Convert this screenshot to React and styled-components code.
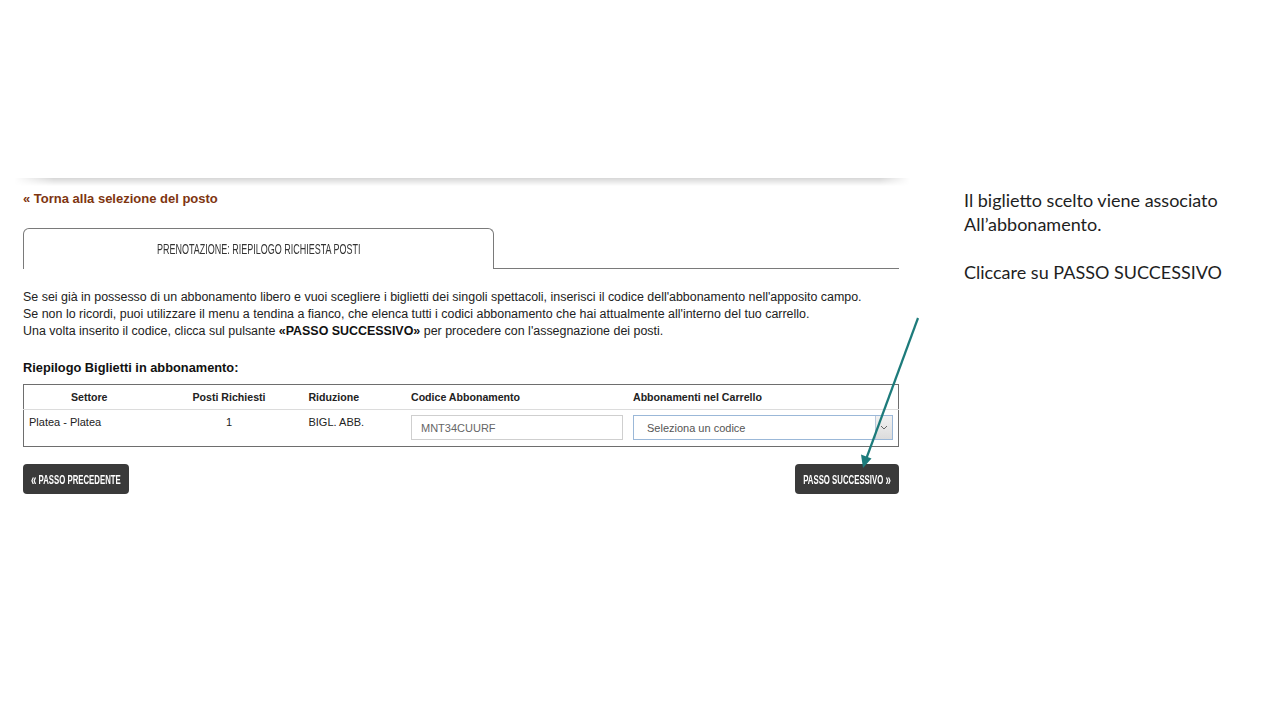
import React from "react";
import styled, { createGlobalStyle } from "styled-components";

const GlobalStyle = createGlobalStyle`
  html, body {
    margin: 0;
    padding: 0;
    background: #ffffff;
  }
  body {
    font-family: "Liberation Sans", Arial, sans-serif;
    color: #222;
  }
`;

const Slide = styled.div`
  position: relative;
  width: 1280px;
  height: 720px;
  display: flex;
  overflow: hidden;
`;

const Capture = styled.div`
  width: 910px;
  padding-top: 178px;
  flex-shrink: 0;
`;

const TopShadow = styled.div`
  height: 8px;
  margin-left: 14px;
  background: linear-gradient(to bottom, rgba(0, 0, 0, 0.16), rgba(0, 0, 0, 0));
  -webkit-mask-image: linear-gradient(to right, transparent 0, #000 40px, #000 calc(100% - 30px), transparent 100%);
  mask-image: linear-gradient(to right, transparent 0, #000 40px, #000 calc(100% - 30px), transparent 100%);
`;

const Content = styled.div`
  width: 876px;
  margin-left: 23px;
`;

const BackLink = styled.a`
  display: block;
  margin-top: 5px;
  font-size: 13px;
  line-height: 16px;
  font-weight: bold;
  color: #7e3510;
  text-decoration: none;
`;

const TabBar = styled.div`
  display: flex;
  align-items: flex-end;
  margin-top: 21px;
`;

const Tab = styled.div`
  width: 471px;
  height: 41px;
  border: 1px solid #7a7a7a;
  border-bottom: none;
  border-radius: 6px 6px 0 0;
  display: flex;
  align-items: center;
  justify-content: center;
  padding-bottom: 2px;
  box-sizing: border-box;
  color: #333;
`;

/* the site's condensed heading face is not installed: squeeze Liberation Sans */
const Condensed = styled.span`
  display: inline-block;
  white-space: nowrap;
  font-size: ${(p) => p.$size || 13}px;
  font-weight: ${(p) => (p.$bold ? "bold" : "normal")};
  transform: scaleX(${(p) => p.$scale || 0.75});
  transform-origin: center;
`;

const Chevron = styled.span`
  font-size: 1.25em;
  font-weight: 900;
  vertical-align: -1px;
`;

const TabLine = styled.div`
  flex: 1;
  border-bottom: 1px solid #7a7a7a;
`;

const Intro = styled.p`
  margin: 20px 0 0;
  font-size: 12.45px;
  line-height: 17px;
  color: #222;

  b {
    color: #111;
  }
`;

const SectionTitle = styled.h3`
  margin: 20px 0 0;
  font-size: 12.8px;
  line-height: 16px;
  font-weight: bold;
  color: #111;
`;

const Table = styled.table`
  margin-top: 8px;
  width: 100%;
  border-collapse: collapse;
  border: 1px solid #6e6e6e;
  font-size: 11px;
  color: #222;
`;

const Th = styled.th`
  height: 24px;
  padding: 0 5px;
  font-size: 10.6px;
  font-weight: bold;
  text-align: ${(p) => p.$align || "left"};
  border-bottom: 1px solid #dcdcdc;
  color: #222;
`;

const Td = styled.td`
  height: 30px;
  padding: 6px 5px 0;
  vertical-align: top;
  text-align: ${(p) => p.$align || "left"};
  font-size: 11px;
`;

const CodeInput = styled.div`
  width: 212px;
  height: 25px;
  box-sizing: border-box;
  border: 1px solid #cfcfcf;
  padding: 0 9px;
  display: flex;
  align-items: center;
  font-size: 11px;
  color: #666;
  margin-top: -1px;
`;

const Select = styled.div`
  width: 260px;
  height: 25px;
  box-sizing: border-box;
  border: 1px solid #9bb8d8;
  display: flex;
  align-items: stretch;
  margin-top: -1px;
  font-size: 11px;
  color: #555;
`;

const SelectValue = styled.div`
  flex: 1;
  display: flex;
  align-items: center;
  padding-left: 13px;
`;

const SelectToggle = styled.div`
  width: 16px;
  background: linear-gradient(#f2f2f2, #dcdcdc);
  border-left: 1px solid #b9c9dc;
  display: flex;
  align-items: center;
  justify-content: center;
`;

const Actions = styled.div`
  display: flex;
  justify-content: space-between;
  margin-top: 17px;
`;

const StepButton = styled.button`
  height: 30px;
  width: ${(p) => (p.$next ? "104px" : "106px")};
  padding: 0;
  border: none;
  border-radius: 4px;
  background: #3a3a3a;
  color: #fff;
  font-family: "Liberation Sans", sans-serif;
  display: flex;
  align-items: center;
  justify-content: center;
  overflow: hidden;
  cursor: pointer;
`;

const Notes = styled.div`
  margin-left: 54px;
  padding-top: 188px;
  font-family: Lato, "Open Sans", sans-serif;
  font-size: 18px;
  line-height: 24px;
  color: #1e1e1e;
`;

const NoteLine = styled.div`
  white-space: nowrap;
  margin-top: ${(p) => (p.$gap ? "24px" : "0")};
`;

const Pointer = styled.svg`
  position: absolute;
  left: 0;
  top: 0;
  pointer-events: none;
`;

export default function App() {
  return (
    <>
      <GlobalStyle />
      <Slide>
        <Capture>
          <TopShadow />
          <Content>
            <BackLink href="#">« Torna alla selezione del posto</BackLink>
            <TabBar>
              <Tab>
                <Condensed $size={15} $scale={0.6}>PRENOTAZIONE: RIEPILOGO RICHIESTA POSTI</Condensed>
              </Tab>
              <TabLine />
            </TabBar>
            <Intro>
              Se sei già in possesso di un abbonamento libero e vuoi scegliere i biglietti dei singoli spettacoli, inserisci il codice dell'abbonamento nell'apposito campo.
              <br />
              Se non lo ricordi, puoi utilizzare il menu a tendina a fianco, che elenca tutti i codici abbonamento che hai attualmente all'interno del tuo carrello.
              <br />
              Una volta inserito il codice, clicca sul pulsante <b>«PASSO SUCCESSIVO»</b> per procedere con l'assegnazione dei posti.
            </Intro>
            <SectionTitle>Riepilogo Biglietti in abbonamento:</SectionTitle>
            <Table>
              <colgroup>
                <col style={{ width: 132 }} />
                <col style={{ width: 150 }} />
                <col style={{ width: 103 }} />
                <col style={{ width: 221 }} />
                <col />
              </colgroup>
              <thead>
                <tr>
                  <Th $align="center">Settore</Th>
                  <Th $align="center">Posti Richiesti</Th>
                  <Th>Riduzione</Th>
                  <Th>Codice Abbonamento</Th>
                  <Th>Abbonamenti nel Carrello</Th>
                </tr>
              </thead>
              <tbody>
                <tr>
                  <Td>Platea - Platea</Td>
                  <Td $align="center">1</Td>
                  <Td>BIGL. ABB.</Td>
                  <Td>
                    <CodeInput>MNT34CUURF</CodeInput>
                  </Td>
                  <Td>
                    <Select>
                      <SelectValue>Seleziona un codice</SelectValue>
                      <SelectToggle>
                        <svg width="8" height="5" viewBox="0 0 8 5">
                          <path d="M1 1 L4 4 L7 1" fill="none" stroke="#666" strokeWidth="1" />
                        </svg>
                      </SelectToggle>
                    </Select>
                  </Td>
                </tr>
              </tbody>
            </Table>
            <Actions>
              <StepButton>
                <Condensed $size={13} $bold $scale={0.6}>
                  <Chevron>«</Chevron> PASSO PRECEDENTE
                </Condensed>
              </StepButton>
              <StepButton $next>
                <Condensed $size={13} $bold $scale={0.6}>
                  PASSO SUCCESSIVO <Chevron>»</Chevron>
                </Condensed>
              </StepButton>
            </Actions>
          </Content>
        </Capture>
        <Notes>
          <NoteLine>Il biglietto scelto viene associato</NoteLine>
          <NoteLine>All’abbonamento.</NoteLine>
          <NoteLine $gap>Cliccare su PASSO SUCCESSIVO</NoteLine>
        </Notes>
        <Pointer width="1280" height="720" viewBox="0 0 1280 720">
          <line x1="918" y1="318" x2="866.5" y2="458" stroke="#1d7b7b" strokeWidth="2.2" />
          <polygon points="863,468 861,454.5 871.5,458.5" fill="#1d7b7b" />
        </Pointer>
      </Slide>
    </>
  );
}
